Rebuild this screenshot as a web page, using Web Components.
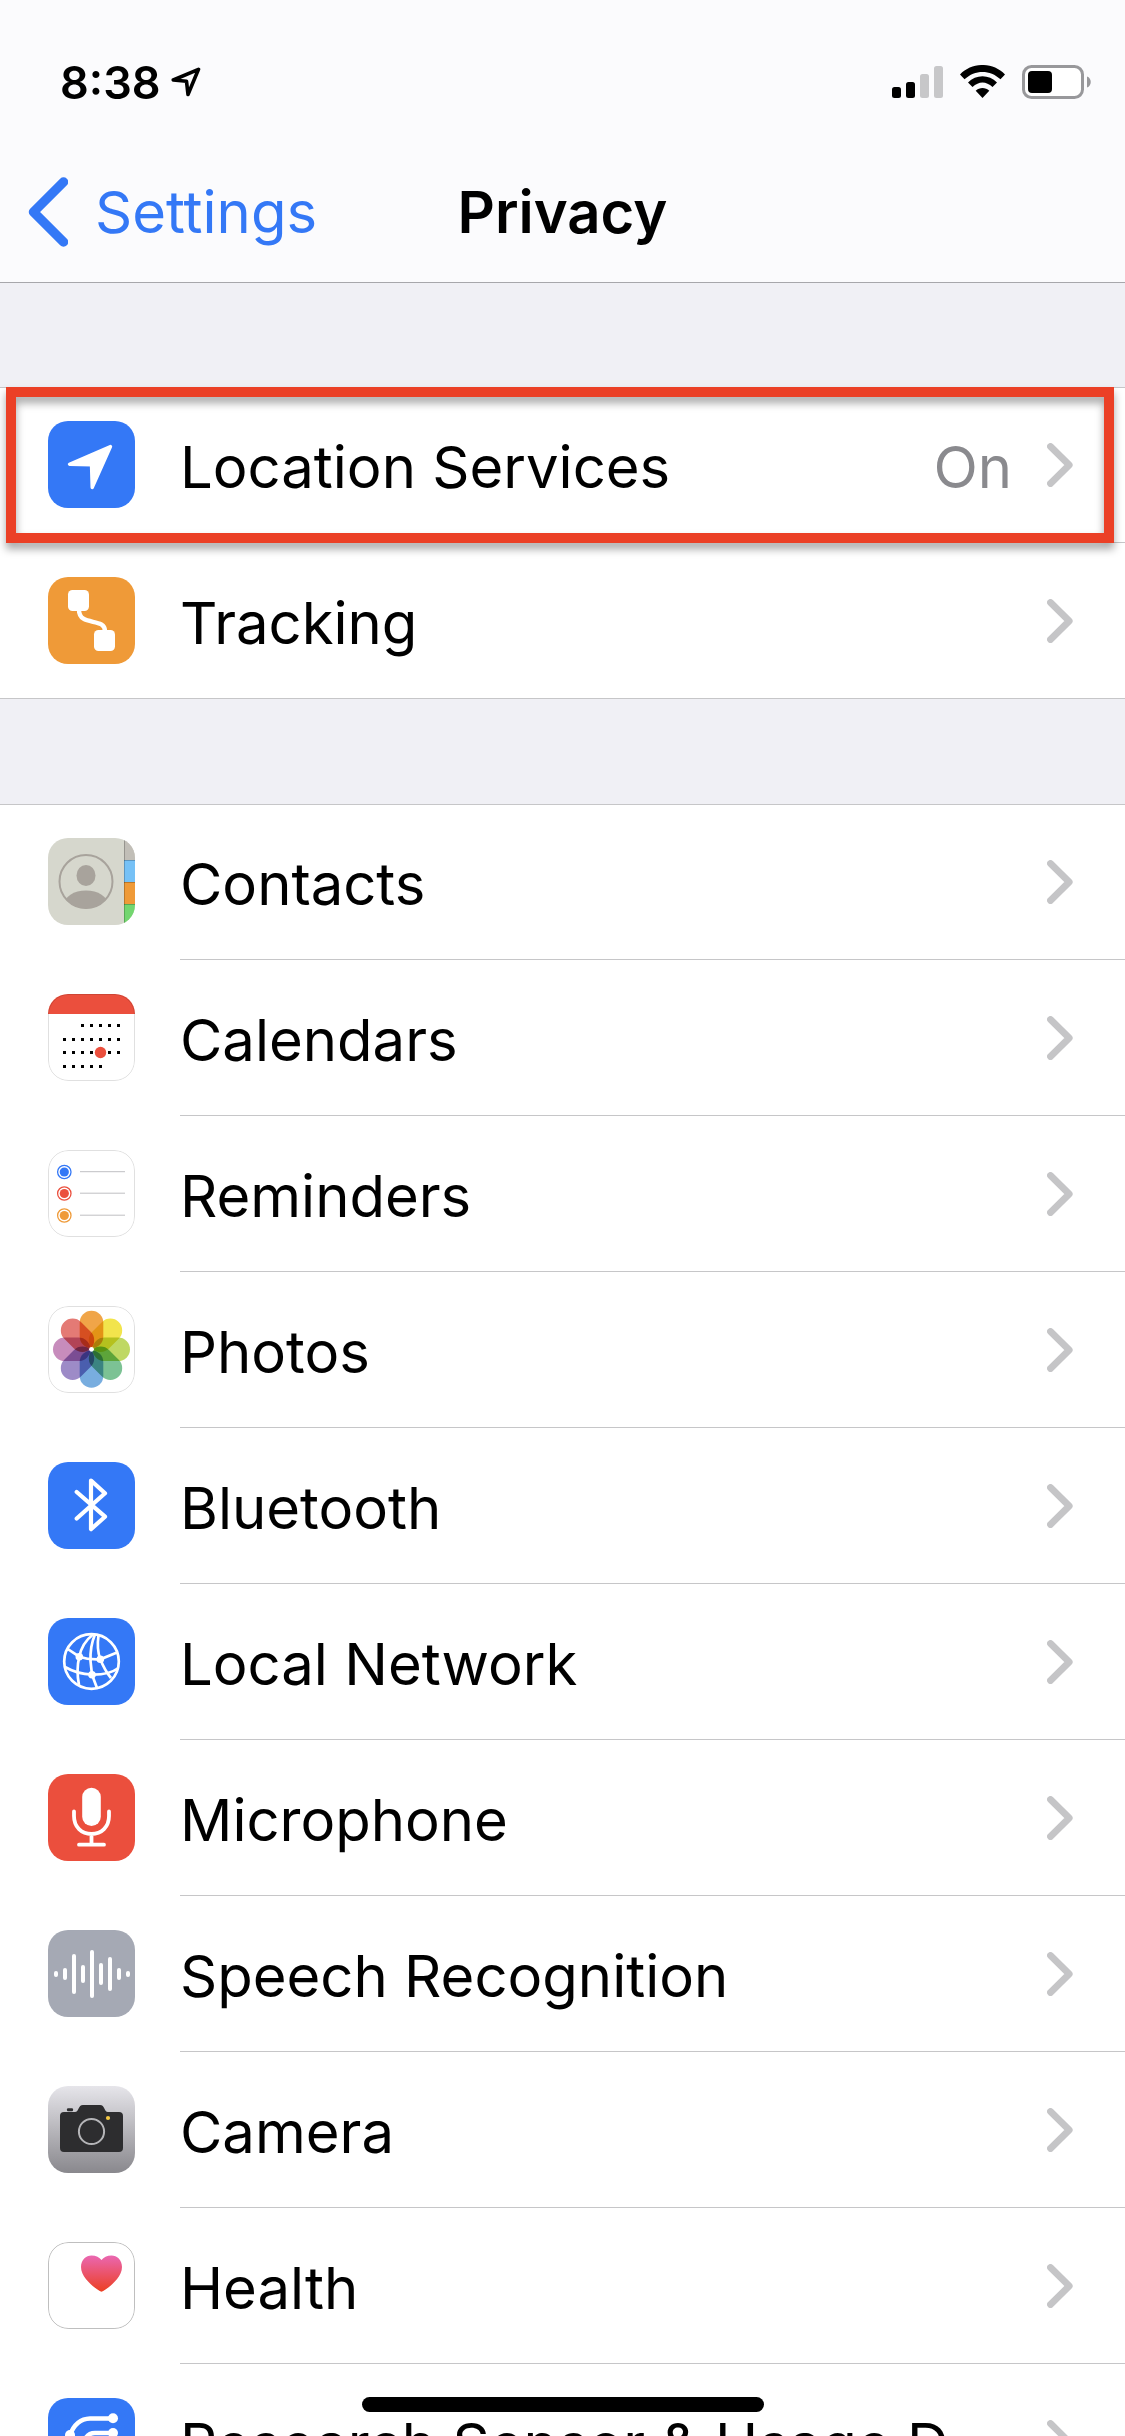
<!DOCTYPE html>
<html lang="en">
<head>
<meta charset="utf-8">
<meta name="viewport" content="width=device-width, initial-scale=1">
<title>Privacy</title>
<style>
    html, body {
        margin: 0;
        height: 100%;
        overflow: hidden;
    }
    body {
        background: #f0f0f5;
        color: #000;
        font-family: Inter, "Liberation Sans", sans-serif;
        font-size: 58px;
    }
</style>
</head>
<body>
<settings-page>
    <status-bar slot="header" time="8:38"></status-bar>
    <nav-bar slot="header" back="Settings">Privacy</nav-bar>

    <settings-group>
        <settings-row icon="location" value="On" highlighted>Location Services</settings-row>
        <settings-row icon="tracking">Tracking</settings-row>
    </settings-group>

    <settings-group>
        <settings-row icon="contacts">Contacts</settings-row>
        <settings-row icon="calendars">Calendars</settings-row>
        <settings-row icon="reminders">Reminders</settings-row>
        <settings-row icon="photos">Photos</settings-row>
        <settings-row icon="bluetooth">Bluetooth</settings-row>
        <settings-row icon="network">Local Network</settings-row>
        <settings-row icon="microphone">Microphone</settings-row>
        <settings-row icon="speech">Speech Recognition</settings-row>
        <settings-row icon="camera">Camera</settings-row>
        <settings-row icon="health">Health</settings-row>
        <settings-row icon="research">Research Sensor &amp; Usage D...</settings-row>
    </settings-group>
</settings-page>

<script>
const PETALS = ['#f0a548', '#f2e44c', '#bfd863', '#7cc294', '#78addf', '#9d8bc7', '#c78cbc', '#e47a75'];
const BARS = [3, 6, 20, 9, 24, 11, 17, 6, 3];

function calendarDots() {
    const rows = [[31, 2, 6], [45, 0, 6], [58, 0, 6], [72, 0, 4]];
    let out = '';
    for (const [y, from, to] of rows) {
        for (let i = from; i <= to; i++) {
            out += `<rect x="${15 + i * 9}" y="${y - 1}" width="3" height="3"/>`;
        }
    }
    return out;
}

// all app icons are drawn on an 87 x 87 tile
const ICONS = {
    location: `
        <rect width="87" height="87" fill="#3478f6"/>
        <path d="M62.5 25.5 21.5 43.2 43.5 43.7 44.2 66.5Z" fill="#fff" stroke="#fff" stroke-width="3.4" stroke-linejoin="round"/>`,
    tracking: `
        <rect width="87" height="87" fill="#ef9a38"/>
        <rect x="20" y="13" width="21" height="21" rx="4.5" fill="#fff"/>
        <rect x="46" y="53" width="21" height="21" rx="4.5" fill="#fff"/>
        <path d="M31 33C31 50 57 40 57 54" fill="none" stroke="#fff" stroke-width="4.4"/>`,
    contacts: `
        <clipPath id="face"><circle cx="38" cy="43.5" r="27"/></clipPath>
        <rect width="87" height="87" fill="#d6d7cd"/>
        <rect x="76" width="11" height="22" fill="#c1beb7"/>
        <rect x="76" y="22" width="11" height="22" fill="#76c1f6"/>
        <rect x="76" y="44" width="11" height="22" fill="#ef9a38"/>
        <rect x="76" y="66" width="11" height="21" fill="#73d66f"/>
        <path d="M76 22.5h11M76 44.5h11M76 66.5h11M76.5 0v87" stroke="#000" stroke-opacity=".22"/>
        <circle cx="38" cy="43.5" r="26.5" fill="none" stroke="#a8a39c" stroke-width="2"/>
        <ellipse cx="38" cy="37.5" rx="9.5" ry="10.5" fill="#a8a39c"/>
        <ellipse cx="38" cy="67" rx="22" ry="14.5" fill="#a8a39c" clip-path="url(#face)"/>`,
    calendars: `
        <rect width="87" height="87" fill="#fff"/>
        <rect width="87" height="20" fill="#eb4f3d"/>
        ${calendarDots()}
        <circle cx="52.5" cy="58.5" r="5.7" fill="#eb4f3d"/>
        <rect class="edge" x=".5" y=".5" width="86" height="86" rx="20"/>`,
    reminders: `
        <rect width="87" height="87" fill="#fff"/>
        ${[['#3478f6', 22], ['#eb4f3d', 43.5], ['#ef9a38', 65.5]].map(([color, y]) => `
            <circle cx="16.3" cy="${y}" r="6.7" fill="none" stroke="${color}" stroke-width="1.3"/>
            <circle cx="16.3" cy="${y}" r="4.6" fill="${color}"/>
            <path d="M32 ${y - .3}H77" stroke="#bfbfc3"/>`).join('')}
        <rect class="edge" x=".5" y=".5" width="86" height="86" rx="20"/>`,
    photos: `
        <rect width="87" height="87" fill="#fff"/>
        <g style="isolation: isolate">
            ${PETALS.map((color, i) => `<rect x="31.7" y="4.8" width="23.6" height="37.4" rx="11.8" fill="${color}" transform="rotate(${i * 45} 43.5 43.3)" style="mix-blend-mode: multiply"/>`).join('')}
        </g>
        <circle cx="43.5" cy="43.3" r="2.4" fill="#fff"/>
        <rect class="edge" x=".5" y=".5" width="86" height="86" rx="20"/>`,
    bluetooth: `
        <rect width="87" height="87" fill="#3478f6"/>
        <path d="M28.7 30 57 54.7 43 67.2V18.5L57 31.3 28.7 56.5" fill="none" stroke="#fff" stroke-width="4.2" stroke-linecap="round" stroke-linejoin="round"/>`,
    network: `
        <rect width="87" height="87" fill="#3478f6"/>
        <g fill="none" stroke="#fff" stroke-width="2.7">
            <circle cx="43.5" cy="43.5" r="27.3"/>
            <path d="M45 16.5Q34 25 31.3 38.7 28 52 31 67"/>
            <path d="M47 16.5Q42 28 42.5 43L44 56.7 49 70"/>
            <path d="M50.5 17.5Q48.5 31 52.3 41.3 57 53 63 60"/>
            <path d="M19 30.5 31.3 38.7Q41 42 52.3 41.3L69 34.5"/>
            <path d="M17 49Q29 56 44 56.7 61 57 70.5 50"/>
        </g>
        <g fill="#fff">
            <circle cx="31.3" cy="38.7" r="3.8"/>
            <circle cx="52.3" cy="41.3" r="3.8"/>
            <circle cx="44" cy="56.7" r="3.8"/>
        </g>`,
    microphone: `
        <rect width="87" height="87" fill="#eb4f3d"/>
        <rect x="34.2" y="13.7" width="18.6" height="38.3" rx="9.3" fill="#fff"/>
        <path d="M26 37.5V42C26 53 33.5 60 43.5 60S61 53 61 42V37.5M43.5 60V70.7M31 70.7H56" fill="none" stroke="#fff" stroke-width="3.8" stroke-linecap="round"/>`,
    speech: `
        <rect width="87" height="87" fill="#a5a9b4"/>
        ${BARS.map((h, i) => `<rect x="${6 + i * 9}" y="${44 - h}" width="4" height="${h * 2}" rx="2" fill="#fff"/>`).join('')}`,
    camera: `
        <linearGradient id="steel" x2="0" y2="1"><stop stop-color="#e6e5ea"/><stop offset="1" stop-color="#89888d"/></linearGradient>
        <rect width="87" height="87" fill="url(#steel)"/>
        <rect x="19" y="22.3" width="6" height="3" rx="1" fill="#2d2d2f"/>
        <path d="M16 26H27C31 26 30 19 35 19H52C57 19 56 26 60 26H71Q75 26 75 30V62Q75 66 71 66H16Q12 66 12 62V30Q12 26 16 26Z" fill="#2d2d2f"/>
        <circle cx="43.5" cy="45.5" r="12.6" fill="none" stroke="#b5b5b8" stroke-width="2"/>
        <circle cx="60" cy="32" r="2.1" fill="#f5c944"/>`,
    health: `
        <linearGradient id="pulse" x2="0" y2="1"><stop stop-color="#ea67b1"/><stop offset="1" stop-color="#ec3f22"/></linearGradient>
        <rect width="87" height="87" fill="#fff"/>
        <path d="M53.5 49.7C51 49 33 37.5 33 25 33 18 38 13.6 43.5 13.6 48 13.6 51.5 15.5 53.5 18 55.5 15.5 59 13.6 63.5 13.6 69 13.6 74 18 74 25 74 37.5 56 49 53.5 49.7Z" fill="url(#pulse)"/>
        <rect class="edge dark" x=".5" y=".5" width="86" height="86" rx="20"/>`,
    research: `
        <rect width="87" height="87" fill="#3478f6"/>
        <g fill="none" stroke="#fff" stroke-width="4.4">
            <path d="M65 20.5H42Q28 21 22 37V50Q28 66 42 66.5H65"/>
            <path d="M65 35H47Q39 35 36 43.5 39 52 47 52H65"/>
        </g>
        <g fill="#fff">
            <circle cx="65" cy="20.3" r="5"/>
            <circle cx="65" cy="35" r="5"/>
            <circle cx="65" cy="52" r="5"/>
            <circle cx="65" cy="66.5" r="5"/>
            <circle cx="22" cy="37" r="5"/>
        </g>`
};

class SettingsPage extends HTMLElement {
    connectedCallback() {
        this.attachShadow({ mode: 'open' });
        this.shadowRoot.innerHTML = `
            <style>
                :host {
                    display: flex;
                    flex-direction: column;
                    height: 100%;
                }
                header {
                    flex: none;
                    background: #fbfbfd;
                    border-bottom: 1px solid #a7a7ab;
                }
                main {
                    flex: 1;
                    min-height: 0;
                    overflow: hidden;
                    display: flex;
                    flex-direction: column;
                    gap: 105px;
                    padding-top: 104px;
                }
                .home {
                    position: fixed;
                    bottom: 24px;
                    left: 50%;
                    width: 402px;
                    height: 15px;
                    margin-left: -201px;
                    border-radius: 8px;
                    background: #000;
                }
            </style>
            <header><slot name="header"></slot></header>
            <main><slot></slot></main>
            <div class="home"></div>
        `;
    }
}
customElements.define('settings-page', SettingsPage);

class StatusBar extends HTMLElement {
    connectedCallback() {
        this.attachShadow({ mode: 'open' });
        this.shadowRoot.innerHTML = `
            <style>
                :host {
                    display: flex;
                    justify-content: space-between;
                    align-items: center;
                    height: 100px;
                    padding: 32px 34px 0 60px;
                    font-size: 45px;
                    font-weight: 600;
                }
                div {
                    display: flex;
                    align-items: center;
                }
                .clock {
                    gap: 10px;
                }
                .signals {
                    gap: 17px;
                }
                svg {
                    display: block;
                }
            </style>
            <div class="clock">
                <time>${this.getAttribute('time')}</time>
                <svg width="30" height="30" viewBox="0 0 30 30" fill="none" stroke="#000" stroke-width="3.6" stroke-linejoin="round">
                    <path d="M27.5 2.3 2.3 13 15.5 14.3 17 27.5Z"/>
                </svg>
            </div>
            <div class="signals">
                <svg width="51" height="34" viewBox="0 0 51 34">
                    <rect y="22" width="9" height="11" rx="2.5"/>
                    <rect x="14" y="17" width="9" height="16" rx="2.5"/>
                    <rect x="28" y="9" width="9" height="24" rx="2.5" fill="#c7c7c9"/>
                    <rect x="42" y="1" width="9" height="32" rx="2.5" fill="#c7c7c9"/>
                </svg>
                <svg width="45" height="34" viewBox="0 0 45 34">
                    <path d="M0 9.5C12-3.2 33-3.2 45 9.5L40.5 14.3C30 4.5 15 4.5 4.5 14.3Z"/>
                    <path d="M8 17.5C16 9 29 9 37 17.5L32.5 22C26 16 19 16 12.5 22Z"/>
                    <path d="M15.7 25.7C19.5 22 25.5 22 29.3 25.7L22.5 33Z"/>
                </svg>
                <svg width="69" height="34" viewBox="0 0 69 34">
                    <rect x="1.5" y="1.5" width="59" height="31" rx="8" fill="#fff" stroke="#98989b" stroke-width="3"/>
                    <rect x="6" y="6" width="24" height="22" rx="4"/>
                    <path d="M65 11.5C70 13 70 21 65 22.5Z" fill="#98989b"/>
                </svg>
            </div>
        `;
    }
}
customElements.define('status-bar', StatusBar);

class NavBar extends HTMLElement {
    connectedCallback() {
        this.attachShadow({ mode: 'open' });
        this.shadowRoot.innerHTML = `
            <style>
                :host {
                    display: grid;
                    grid-template-columns: 1fr auto 1fr;
                    align-items: center;
                    height: 140px;
                    padding: 10px 28px 0;
                }
                a {
                    display: flex;
                    align-items: center;
                    gap: 27px;
                    color: #3478f6;
                    text-decoration: none;
                }
                h1 {
                    margin: 0;
                    font-size: 58px;
                    font-weight: 600;
                }
            </style>
            <a href="#settings">
                <svg width="40" height="70" viewBox="0 0 40 70" fill="none" stroke="currentColor" stroke-width="9.5" stroke-linecap="round" stroke-linejoin="round">
                    <path d="M35.5 5 5.5 35 35.5 65"/>
                </svg>
                ${this.getAttribute('back')}
            </a>
            <h1><slot></slot></h1>
        `;
    }
}
customElements.define('nav-bar', NavBar);

class SettingsGroup extends HTMLElement {
    connectedCallback() {
        this.attachShadow({ mode: 'open' });
        this.shadowRoot.innerHTML = `
            <style>
                :host {
                    display: block;
                    background: #fff;
                    box-shadow: inset 0 1px #c6c6c8, inset 0 -1px #c6c6c8;
                }
            </style>
            <slot></slot>
        `;
    }
}
customElements.define('settings-group', SettingsGroup);

class AppIcon extends HTMLElement {
    connectedCallback() {
        this.attachShadow({ mode: 'open' });
        this.shadowRoot.innerHTML = `
            <style>
                :host {
                    display: block;
                    flex: none;
                    width: 87px;
                    height: 87px;
                    border-radius: 20px;
                    overflow: hidden;
                }
                svg {
                    display: block;
                }
                .edge {
                    fill: none;
                    stroke: #000;
                    stroke-opacity: .12;
                }
                .edge.dark {
                    stroke-opacity: .25;
                }
            </style>
            <svg width="87" height="87" viewBox="0 0 87 87" aria-hidden="true">${ICONS[this.getAttribute('name')]}</svg>
        `;
    }
}
customElements.define('app-icon', AppIcon);

class SettingsRow extends HTMLElement {
    connectedCallback() {
        const value = this.getAttribute('value') || '';
        this.attachShadow({ mode: 'open' });
        this.shadowRoot.innerHTML = `
            <style>
                :host {
                    display: block;
                    position: relative;
                }
                a {
                    display: flex;
                    align-items: center;
                    padding-left: 48px;
                    color: inherit;
                    text-decoration: none;
                }
                app-icon {
                    margin-bottom: 1px;
                }
                .body {
                    flex: 1;
                    min-width: 0;
                    display: flex;
                    align-items: center;
                    height: 155px;
                    margin-left: 45px;
                    padding-right: 52px;
                    border-bottom: 1px solid #c6c6c8;
                }
                .label {
                    flex: 1;
                    min-width: 0;
                    white-space: nowrap;
                    padding-top: 4px;
                }
                .value {
                    color: #8a8a8e;
                    padding: 4px 35px 0 0;
                }
                .chevron {
                    flex: none;
                }
                :host(:last-child) .body {
                    border-bottom-color: transparent;
                }
                /* callout frame drawn over the row */
                :host([highlighted])::after {
                    content: "";
                    position: absolute;
                    z-index: 1;
                    inset: 0 11px 0 6px;
                    border: 10px solid #eb4026;
                    filter: drop-shadow(0 6px 4px rgba(0, 0, 0, .35));
                    pointer-events: none;
                }
            </style>
            <a href="#${this.getAttribute('icon')}">
                <app-icon name="${this.getAttribute('icon')}"></app-icon>
                <span class="body">
                    <span class="label"><slot></slot></span>
                    ${value && `<span class="value">${value}</span>`}
                    <svg class="chevron" width="26" height="44" viewBox="0 0 26 44" fill="none" stroke="#c5c5c7" stroke-width="6.8" stroke-linecap="round" stroke-linejoin="round">
                        <path d="M3.5 3.5 22.2 22 3.5 40.5"/>
                    </svg>
                </span>
            </a>
        `;
    }
}
customElements.define('settings-row', SettingsRow);
</script>
</body>
</html>
